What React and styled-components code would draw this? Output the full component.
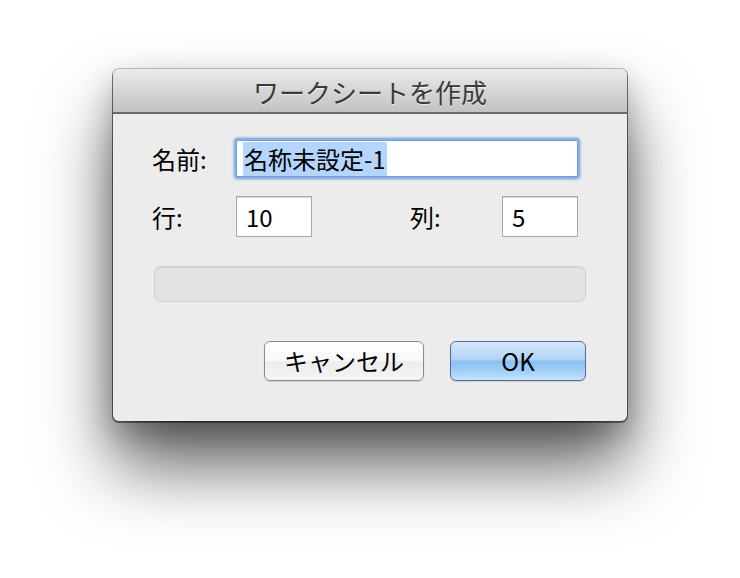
import React from 'react';
import styled, { createGlobalStyle } from 'styled-components';

const GlobalStyle = createGlobalStyle`
  html, body {
    margin: 0;
    padding: 0;
    background: #ffffff;
  }
  body {
    font-family: "Noto Sans CJK JP", "Noto Sans", sans-serif;
    color: #000;
  }
`;

const Page = styled.div`
  width: 740px;
  height: 578px;
  padding: 69px 0 0 113px;
  box-sizing: border-box;
  overflow: hidden;
`;

const Dialog = styled.div`
  width: 514px;
  height: 352px;
  display: flex;
  flex-direction: column;
  background: #ececec;
  border-radius: 6px;
  box-shadow:
    0 0 0 1px rgba(0, 0, 0, 0.22),
    0 1px 0 1px rgba(0, 0, 0, 0.4),
    0 45px 70px rgba(0, 0, 0, 0.62),
    0 12px 30px rgba(0, 0, 0, 0.25);
  overflow: hidden;
`;

const TitleBar = styled.div`
  height: 43px;
  flex: none;
  display: flex;
  align-items: center;
  justify-content: center;
  background: linear-gradient(#ebebeb, #d6d6d6 50%, #c2c2c2);
  border-bottom: 2px solid #6c6c6c;
`;

const Title = styled.div`
  font-size: 26px;
  line-height: 1;
  color: #3a3a3a;
  text-shadow: 0 1px 0 rgba(255, 255, 255, 0.6);
  padding-top: 2px;
`;

const Body = styled.div`
  flex: 1;
  display: flex;
  flex-direction: column;
  padding: 26px 41px 0 39px;
`;

const Row = styled.div`
  display: flex;
  align-items: center;
  margin-bottom: ${({ $gap }) => $gap}px;
`;

const Label = styled.div`
  width: ${({ $w }) => $w}px;
  font-size: 24px;
  line-height: 1;
  flex: none;
`;

const NameField = styled.div`
  width: 342px;
  height: 37px;
  box-sizing: border-box;
  background: #fff;
  border: 1px solid #6f9bd0;
  box-shadow: 0 0 0 2px #8bb3e3, 0 0 2px 3px rgba(120, 165, 220, 0.55);
  border-radius: 2px;
  display: flex;
  align-items: center;
  padding-left: 6px;
`;

const Selected = styled.span`
  background: #b4d5fe;
  font-size: 24px;
  line-height: 34px;
  height: 34px;
  padding: 0 1px;
`;

const NumField = styled.div`
  width: 76px;
  height: 41px;
  box-sizing: border-box;
  background: #fff;
  border: 1px solid #a9a9a9;
  box-shadow: inset 0 1px 1px rgba(0, 0, 0, 0.15);
  display: flex;
  align-items: center;
  padding-left: 9px;
  font-size: 24px;
  margin-right: ${({ $mr }) => $mr || 0}px;
`;

const Track = styled.div`
  margin-left: 2px;
  width: 432px;
  height: 36px;
  box-sizing: border-box;
  background: #e3e3e3;
  border: 1px solid #cfcfcf;
  border-radius: 7px;
  box-shadow: inset 0 1px 1px rgba(0, 0, 0, 0.05);
  margin-bottom: 39px;
`;

const Buttons = styled.div`
  display: flex;
  justify-content: flex-end;
  gap: 26px;
`;

const Button = styled.button`
  width: ${({ $w }) => $w}px;
  height: 40px;
  box-sizing: border-box;
  border-radius: 6px;
  font-family: inherit;
  font-size: 24px;
  line-height: 1;
  color: #000;
  padding: 0;
  cursor: pointer;
  border: 1px solid ${({ $primary }) => ($primary ? '#5a6893' : '#8a8a8a')};
  background: ${({ $primary }) =>
    $primary
      ? 'linear-gradient(#d3e7fa, #b3d5f6 45%, #89c0f1 52%, #a6d2f8 80%, #c3e4fd)'
      : 'linear-gradient(#ffffff, #f7f7f7 50%, #ececec 52%, #f4f4f4)'};
  box-shadow: 0 1px 1px rgba(0, 0, 0, 0.12);
`;

export default function App() {
  return (
    <Page>
      <GlobalStyle />
      <Dialog>
        <TitleBar>
          <Title>ワークシートを作成</Title>
        </TitleBar>
        <Body>
          <Row $gap={19}>
            <Label $w={84}>名前:</Label>
            <NameField>
              <Selected>名称未設定-1</Selected>
            </NameField>
          </Row>
          <Row $gap={29}>
            <Label $w={84}>行:</Label>
            <NumField $mr={98}>10</NumField>
            <Label $w={92}>列:</Label>
            <NumField>5</NumField>
          </Row>
          <Track />
          <Buttons>
            <Button $w={160}>キャンセル</Button>
            <Button $w={136} $primary>OK</Button>
          </Buttons>
        </Body>
      </Dialog>
    </Page>
  );
}
